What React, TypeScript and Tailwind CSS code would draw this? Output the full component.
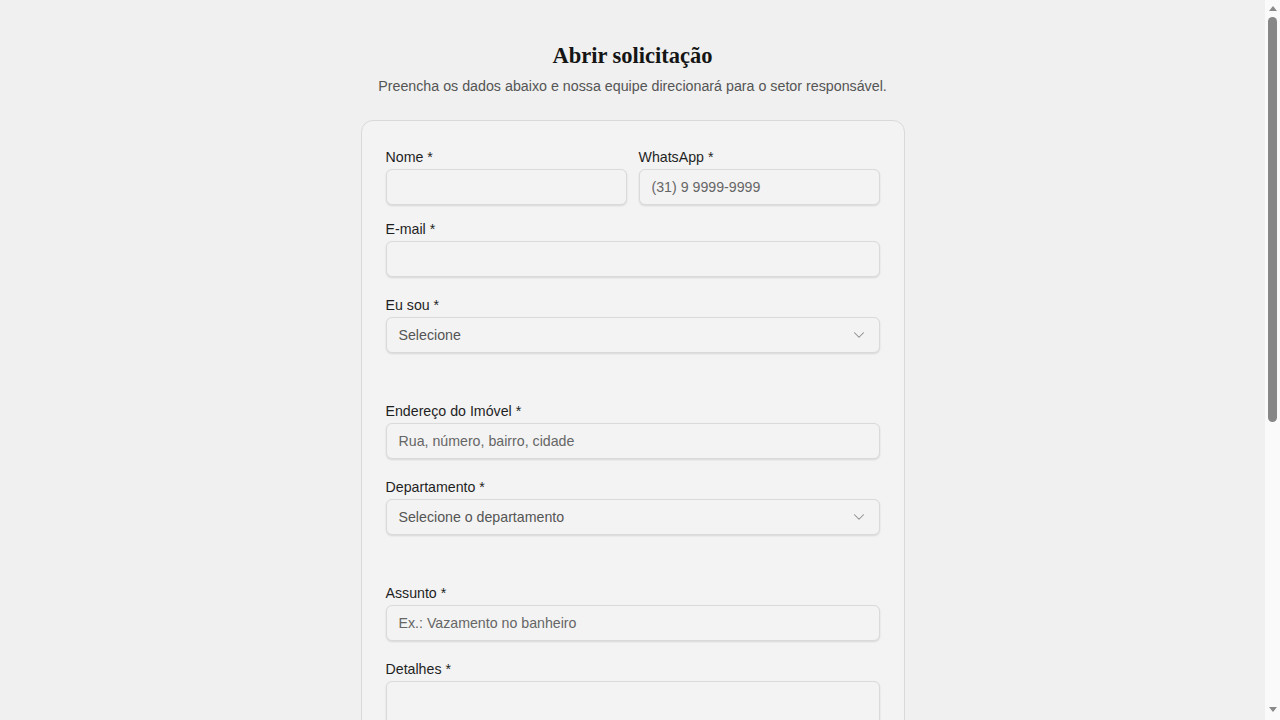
import { ChevronDown } from 'lucide-react';

const inputCls =
  'w-full h-9 px-3 rounded-md border border-[#dadada] bg-[#f3f3f3] text-[14.2px] text-[#222] placeholder:text-[#666] shadow-[0_1px_2px_rgba(0,0,0,0.12)] outline-none';

function Label({ children }: { children: React.ReactNode }) {
  return <label className="block text-[14.2px] leading-5 mb-0.5 text-[#1f1f1f]">{children}</label>;
}

function Select({ placeholder }: { placeholder: string }) {
  return (
    <div className="relative">
      <div className={inputCls + ' flex items-center pt-[2px] text-[#555]'}>{placeholder}</div>
      <ChevronDown size={18} strokeWidth={1.4} className="absolute right-[12px] top-1/2 -translate-y-1/2 text-[#8a8a8a]" />
    </div>
  );
}

// the page's own scrollbar, as shown in the capture
function ScrollBar() {
  return (
    <div className="fixed right-0 top-0 h-screen w-[15px] bg-[#fafafa] flex flex-col items-center">
      <div className="mt-[6px] h-0 w-0 border-x-[4.5px] border-b-[5px] border-x-transparent border-b-[#8a8a8a]" />
      <div className="mt-[6px] h-[405px] w-[9px] rounded-full bg-[#878787]" />
      <div className="mt-auto mb-[8px] h-0 w-0 border-x-[4.5px] border-t-[5px] border-x-transparent border-t-[#8a8a8a]" />
    </div>
  );
}

export default function App() {
  return (
    <div className="h-screen overflow-y-scroll bg-[#eff0ef] font-['Liberation_Sans',Arial,sans-serif]">
      <div className="pt-10 pb-10 pr-[15px]">
        <div className="text-center">
          <h1 className="font-['Liberation_Serif','Times_New_Roman',serif] font-bold text-[22.5px] leading-8 text-[#151515]">
            Abrir solicitação
          </h1>
          <p className="mt-1 text-[14.25px] leading-5 text-[#555]">
            Preencha os dados abaixo e nossa equipe direcionará para o setor responsável.
          </p>
        </div>

        <form className="mx-auto mt-6 w-[544px] rounded-xl border border-[#d9d9d9] bg-[#f3f3f3] px-6 pt-[26px] pb-6">
          <div className="grid grid-cols-2 gap-3">
            <div>
              <Label>Nome *</Label>
              <input className={inputCls} />
            </div>
            <div>
              <Label>WhatsApp *</Label>
              <input className={inputCls} placeholder="(31) 9 9999-9999" />
            </div>
          </div>

          <div className="mt-[14px]">
            <Label>E-mail *</Label>
            <input className={inputCls} />
          </div>

          <div className="mt-[18px]">
            <Label>Eu sou *</Label>
            <Select placeholder="Selecione" />
          </div>

          <div className="mt-12">
            <Label>Endereço do Imóvel *</Label>
            <input className={inputCls} placeholder="Rua, número, bairro, cidade" />
          </div>

          <div className="mt-[18px]">
            <Label>Departamento *</Label>
            <Select placeholder="Selecione o departamento" />
          </div>

          <div className="mt-12">
            <Label>Assunto *</Label>
            <input className={inputCls} placeholder="Ex.: Vazamento no banheiro" />
          </div>

          <div className="mt-[18px]">
            <Label>Detalhes *</Label>
            <textarea className="block w-full h-[140px] px-3 py-2 rounded-md border border-[#dadada] bg-[#f3f3f3] text-[14.2px] shadow-[0_1px_2px_rgba(0,0,0,0.12)] outline-none resize-none" />
          </div>

          <div className="mt-[18px]">
            <Label>Melhor horário para contato</Label>
            <Select placeholder="Selecione" />
          </div>

          <div className="mt-[18px]">
            <Label>Anexos (opcional)</Label>
            <div className={inputCls + ' flex items-center text-[#555]'}>Escolher arquivos</div>
            <p className="mt-1 text-xs text-[#777]">Fotos ou documentos que ajudem a entender a solicitação.</p>
          </div>

          <label className="mt-6 flex items-center gap-2 text-sm text-[#333]">
            <input type="checkbox" className="h-4 w-4" />
            Concordo com o uso dos meus dados para atendimento.
          </label>

          <button type="button" className="mt-6 w-full h-11 rounded-md bg-[#1f1f1f] text-white text-sm font-bold">
            Enviar solicitação
          </button>
        </form>
      </div>
      <ScrollBar />
    </div>
  );
}
